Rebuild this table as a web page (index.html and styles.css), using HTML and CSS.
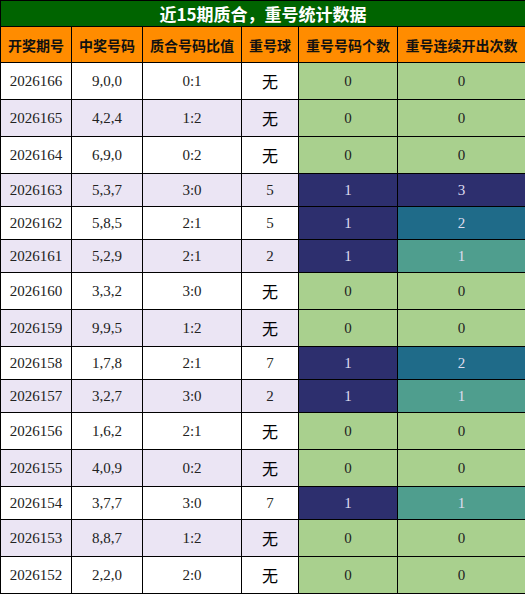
FILE: index.html
```html
<!DOCTYPE html>
<html lang="zh-CN">

<head>
    <meta charset="UTF-8">
    <meta name="viewport" content="width=device-width, initial-scale=1.0">
    <title>近15期质合，重号统计数据</title>
    <link rel="stylesheet" href="styles.css">
</head>

<body>
    <table class="stats">
        <colgroup>
            <col class="c-issue">
            <col class="c-nums">
            <col class="c-ratio">
            <col class="c-repeat">
            <col class="c-count">
            <col class="c-streak">
        </colgroup>
        <thead>
            <tr class="title-row">
                <th colspan="6">近15期质合，重号统计数据</th>
            </tr>
            <tr class="head-row">
                <th>开奖期号</th>
                <th>中奖号码</th>
                <th>质合号码比值</th>
                <th>重号球</th>
                <th>重号号码个数</th>
                <th>重号连续开出次数</th>
            </tr>
        </thead>
        <tbody>
            <tr class="tall"><td>2026166</td><td>9,0,0</td><td>0:1</td><td class="cjk">无</td><td class="lv0">0</td><td class="lv0">0</td></tr>
            <tr class="tall"><td>2026165</td><td>4,2,4</td><td>1:2</td><td class="cjk">无</td><td class="lv0">0</td><td class="lv0">0</td></tr>
            <tr class="tall"><td>2026164</td><td>6,9,0</td><td>0:2</td><td class="cjk">无</td><td class="lv0">0</td><td class="lv0">0</td></tr>
            <tr><td>2026163</td><td>5,3,7</td><td>3:0</td><td>5</td><td class="lv3">1</td><td class="lv3">3</td></tr>
            <tr><td>2026162</td><td>5,8,5</td><td>2:1</td><td>5</td><td class="lv3">1</td><td class="lv2">2</td></tr>
            <tr><td>2026161</td><td>5,2,9</td><td>2:1</td><td>2</td><td class="lv3">1</td><td class="lv1">1</td></tr>
            <tr class="tall"><td>2026160</td><td>3,3,2</td><td>3:0</td><td class="cjk">无</td><td class="lv0">0</td><td class="lv0">0</td></tr>
            <tr class="tall"><td>2026159</td><td>9,9,5</td><td>1:2</td><td class="cjk">无</td><td class="lv0">0</td><td class="lv0">0</td></tr>
            <tr><td>2026158</td><td>1,7,8</td><td>2:1</td><td>7</td><td class="lv3">1</td><td class="lv2">2</td></tr>
            <tr><td>2026157</td><td>3,2,7</td><td>3:0</td><td>2</td><td class="lv3">1</td><td class="lv1">1</td></tr>
            <tr class="tall"><td>2026156</td><td>1,6,2</td><td>2:1</td><td class="cjk">无</td><td class="lv0">0</td><td class="lv0">0</td></tr>
            <tr class="tall"><td>2026155</td><td>4,0,9</td><td>0:2</td><td class="cjk">无</td><td class="lv0">0</td><td class="lv0">0</td></tr>
            <tr><td>2026154</td><td>3,7,7</td><td>3:0</td><td>7</td><td class="lv3">1</td><td class="lv1">1</td></tr>
            <tr class="tall"><td>2026153</td><td>8,8,7</td><td>1:2</td><td class="cjk">无</td><td class="lv0">0</td><td class="lv0">0</td></tr>
            <tr class="tall"><td>2026152</td><td>2,2,0</td><td>2:0</td><td class="cjk">无</td><td class="lv0">0</td><td class="lv0">0</td></tr>
        </tbody>
    </table>
</body>

</html>
```

FILE: styles.css
```css
body {
    margin: 0;
    padding: 0;
    background: #fff;
    font-family: 'Liberation Serif', 'Noto Sans CJK SC', serif;
    color: #222;
}

.stats {
    width: 525px;
    border-collapse: collapse;
    table-layout: fixed;
}

.c-issue { width: 71px; }
.c-nums { width: 71px; }
.c-ratio { width: 99px; }
.c-repeat { width: 57px; }
.c-count { width: 99px; }
.c-streak { width: 128px; }

.stats th,
.stats td {
    border: 1px solid #000;
    padding: 0;
    text-align: center;
    vertical-align: middle;
}

.title-row th {
    height: 25px;
    background-color: #006400;
    color: #fff;
    font-family: 'Noto Sans CJK SC', sans-serif;
    font-size: 17px;
    font-weight: bold;
    line-height: 25px;
}

.head-row th {
    height: 35px;
    background-color: #ff8c00;
    color: #111;
    font-family: 'Noto Sans CJK SC', sans-serif;
    font-size: 14px;
    font-weight: bold;
}

.stats td {
    height: 32px;
    font-size: 15px;
    line-height: 18px;
}

.stats tr.tall td {
    height: 36px;
}

.stats tbody tr:nth-child(even) td {
    background-color: #ebe5f4;
}

.stats td.cjk {
    font-family: 'Noto Sans CJK SC', sans-serif;
    font-size: 16px;
    color: #000;
}

/* 重号等级颜色 */
.stats td.lv0,
.stats tbody tr:nth-child(even) td.lv0 {
    background-color: #a9d08e;
    color: #222;
}

.stats td.lv1,
.stats tbody tr:nth-child(even) td.lv1 {
    background-color: #4f9e8e;
    color: #dde;
}

.stats td.lv2,
.stats tbody tr:nth-child(even) td.lv2 {
    background-color: #1f6b89;
    color: #dde;
}

.stats td.lv3,
.stats tbody tr:nth-child(even) td.lv3 {
    background-color: #2d2f6e;
    color: #dde;
}
```
